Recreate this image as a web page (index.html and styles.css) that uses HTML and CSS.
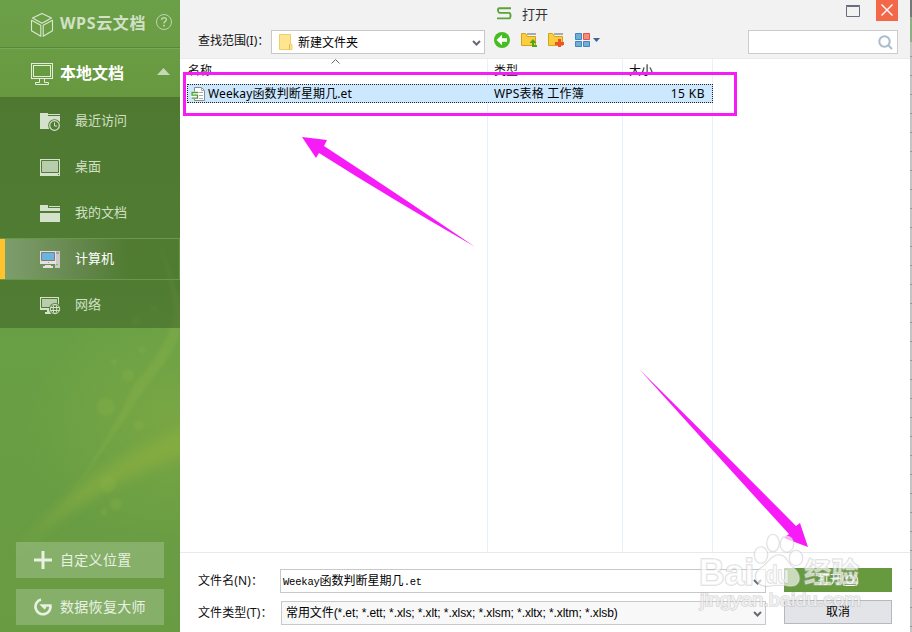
FILE: index.html
```html
<!DOCTYPE html>
<html lang="zh-CN">
<head>
<meta charset="utf-8">
<title>打开</title>
<link rel="stylesheet" href="styles.css">
</head>
<body>
<div class="app">
  <aside class="sidebar">
    <svg class="sidebar-art" viewBox="0 0 180 632" aria-hidden="true">
      <defs>
        <linearGradient id="base" x1="0" y1="0" x2="0" y2="1"><stop offset="0" stop-color="#6ca048"/><stop offset=".16" stop-color="#67983f"/><stop offset=".55" stop-color="#699f45"/><stop offset="1" stop-color="#699b42"/></linearGradient>
        <radialGradient id="glow"><stop offset="0" stop-color="#80aa44" stop-opacity=".7"/><stop offset="1" stop-color="#7aab45" stop-opacity="0"/></radialGradient>
        <filter id="soft" x="-30%" y="-30%" width="160%" height="160%"><feGaussianBlur stdDeviation="6"/></filter>
        <filter id="fine" x="-30%" y="-30%" width="160%" height="160%"><feGaussianBlur stdDeviation="1.8"/></filter>
      </defs>
      <rect width="180" height="632" fill="url(#base)"/>
      <ellipse cx="172" cy="420" rx="150" ry="130" fill="url(#glow)"/>
      <path d="M190 425 Q110 455 62 505 L12 555 Q90 485 190 455Z" fill="#8cb040" opacity=".6" filter="url(#soft)"/>
      <path d="M158 240 Q173 290 175 315 Q165 350 134 385 Q110 440 58 512 Q105 450 147 385 Q186 340 182 315 Q176 280 158 240Z" fill="#87b04a" opacity=".4" filter="url(#fine)"/>
      <g fill="#90b748" opacity=".25" filter="url(#fine)"><circle cx="128" cy="375" r="6"/><circle cx="114" cy="362" r="3"/><circle cx="142" cy="350" r="3"/><circle cx="136" cy="321" r="4"/><circle cx="154" cy="309" r="3"/><circle cx="106" cy="407" r="9"/><circle cx="139" cy="425" r="5"/><circle cx="116" cy="504" r="6"/><circle cx="104" cy="512" r="3"/><circle cx="108" cy="484" r="8"/></g>
    </svg>
    <div class="section">
      <svg class="section-icon" width="24" height="26" viewBox="0 0 24 26"><g fill="none" stroke="#d9e7cf" stroke-width="1.1" stroke-linejoin="round"><path d="M2.5 6 12 1.5 21.5 6 12 11.2Z"/><path d="M1.5 8.2 10.8 13.2V24.3L1.5 18.8Z"/><path d="M22.5 8.2 13.2 13.2V24.3L22.5 18.8Z"/></g></svg>
      <span class="section-name section-cloud">WPS云文档</span>
      <svg class="help" width="18" height="18" viewBox="0 0 18 18"><g fill="none" stroke="#bdd5ac"><circle cx="9" cy="9" r="7.5"/><path d="M6.6 7Q6.6 4.8 9 4.8T11.4 6.8Q11.4 7.8 10.2 8.5Q9 9.1 9 10.5" stroke-width="1.5"/></g><path d="M8.2 11.8h1.7v1.7H8.2z" fill="#bdd5ac"/></svg>
    </div>
    <div class="section section-open">
      <svg class="section-icon" width="24" height="24" viewBox="0 0 24 24"><g fill="none" stroke="#e4eddd"><rect x="1.5" y="1.5" width="21" height="15"/><rect x="3.5" y="3.5" width="17" height="11"/><path d="M9.5 17v3.5H5.5v2h13v-2h-4V17"/></g></svg>
      <span class="section-name">本地文档</span>
      <svg class="caret-up" width="13" height="7" viewBox="0 0 13 7"><path d="M0 7 6.5 0 13 7Z" fill="#c5d9b6"/></svg>
    </div>
    <nav class="places">
      <div class="place"><svg width="22" height="20" viewBox="0 0 22 20"><path d="M1 1h8v2h12v2H9v2h12v10H1z" fill="#d4e1cb"/><path d="M9 5h12v3H9z" fill="#d4e1cb"/><path d="M9 3.500h12" stroke="#507b32"/><path d="M9 2.500h12" stroke="#d4e1cb"/><circle cx="15.500" cy="13.500" r="6.300" fill="#507b32"/><circle cx="15.500" cy="13.500" r="4.800" fill="none" stroke="#d4e1cb" stroke-width="1.200"/><path d="M15.500 10.500v3.500H18" fill="none" stroke="#d4e1cb"/></svg><span>最近访问</span></div>
      <div class="place"><svg width="22" height="20" viewBox="0 0 22 20"><path d="M1 1h20v17H1z" fill="#d4e1cb"/><path d="M2.5 2.5h17v12h-17z" fill="#b9ccac" stroke="#507b32"/><path d="M19 16h1v1h-1z" fill="#507b32"/></svg><span>桌面</span></div>
      <div class="place"><svg width="22" height="20" viewBox="0 0 22 20"><path d="M1 1h8v3h12v3H1zM10 2h11v1H10zM1 9h20v9H1z" fill="#d4e1cb"/></svg><span>我的文档</span></div>
      <div class="place place-active"><svg width="22" height="20" viewBox="0 0 22 20"><path d="M17 1h4v17h-5V1z" fill="#cdc8ca"/><path d="M17 3h3" stroke="#867d80"/><path d="M1 1h16v13H1z" fill="#e7e2e2"/><path d="M2.5 2.5h13v8h-13z" fill="#6ab5df" stroke="#84797b"/><path d="M9 12h1v1H9zM17 14h2v1h-2z" fill="#62d521"/><path d="M6 15h6v1h2v2H4v-2h2z" fill="#e7e2e2"/></svg><span>计算机</span></div>
      <div class="place"><svg width="22" height="20" viewBox="0 0 22 20"><path d="M1 1h19v13H1z" fill="#d4e1cb"/><path d="M2.5 2.5h16v9h-16z" fill="#b9ccac" stroke="#507b32"/><path d="M8 14h5v4H6v-2h2z" fill="#d4e1cb"/><circle cx="16" cy="13" r="6" fill="#527c32"/><g fill="none" stroke="#d4e1cb"><circle cx="16" cy="13" r="4.700"/><ellipse cx="16" cy="13" rx="1.800" ry="4.700"/><path d="M11.500 11.500h9M11.500 14.500h9"/></g></svg><span>网络</span></div>
    </nav>
    <div class="tools">
      <div class="tool"><svg width="18" height="18" viewBox="0 0 18 18"><path d="M7.500 0h3v7.500H18v3h-7.500V18h-3v-7.500H0v-3h7.500z" fill="#e8f1e2"/></svg><span>自定义位置</span></div>
      <div class="tool"><svg width="18" height="18" viewBox="0 0 18 18"><path d="M7 1.500A7.500 7.500 0 1 0 16.400 7.500H8.500L11.500 10.500" fill="none" stroke="#e8f1e2" stroke-width="2.700"/></svg><span>数据恢复大师</span></div>
    </div>
  </aside>

  <main class="dialog">
    <header class="top">
      <div class="titlebar">
        <svg class="s-logo" width="15" height="13" viewBox="0 0 15 13"><path d="M14 1.200H2.200Q1 1.200 1 3.200T2.400 5.900H12.100Q13.500 5.900 13.500 8.600T12.200 11.400H0" fill="none" stroke="#5ba437" stroke-width="1.900"/></svg>
        <h1>打开</h1>
        <svg class="maximize" width="14" height="12" viewBox="0 0 14 12"><path d="M.5 1.5h13v10H.5zM0 .5h14" fill="none" stroke="#666d80"/></svg>
        <div class="close"><svg width="12" height="12" viewBox="0 0 12 12"><path d="m.5.5 11 11M11.5.5l-11 11" stroke="#fff" stroke-width="1.4"/></svg></div>
      </div>
      <div class="toolbar">
        <label>查找范围(I)：</label>
        <div class="lookin">
          <svg width="14" height="16" viewBox="0 0 14 16"><path d="M.5.5h11v10h1.5v5H.5z" fill="#ffe491" stroke="#efcf68"/><path d="M10.5 10.5v5" stroke="#e1b749"/></svg>
          <span>新建文件夹</span>
          <svg class="chev" width="9" height="7" viewBox="0 0 9 7"><path d="m1 1 3.5 3.5L8 1" fill="none" stroke="#666b78" stroke-width="2"/></svg>
        </div>
        <div class="actions">
          <svg width="16" height="16" viewBox="0 0 16 16"><circle cx="8" cy="8" r="8" fill="#46bd20"/><path d="M2.5 8 8 2.8v3.5h5v3.5H8v3.4Z" fill="#fff"/></svg>
          <svg width="17" height="16" viewBox="0 0 17 16"><path d="M6 1h9" stroke="#aaa" stroke-width="2"/><path d="M.5 .5h4l2 3h8v9H.5z" fill="#fccd3d" stroke="#d3a21d"/><path d="M12 6l3.500 4H13v2h3v2h-5v-4H8.500z" fill="#4da819"/></svg>
          <svg width="17" height="16" viewBox="0 0 17 16"><path d="M6 1h9" stroke="#aaa" stroke-width="2"/><path d="M.5 .5h4l2 3h8v9H.5z" fill="#fccd3d" stroke="#d3a21d"/><path d="M10 6h3v3h3v3h-3v2h-3v-2H7V9h3z" fill="#ef5428"/></svg>
          <svg width="25" height="15" viewBox="0 0 25 15"><g fill="#70afd0" stroke="#3f83cb"><path d="M.5.5h6v6h-6zM.5 8.500h6v5h-6zM8.500 8.500h6v5h-6z"/><path d="M8.500.5h6v6h-6z" fill="#f18c7e" stroke="#e4563b"/></g><path d="M18 5h7l-3.500 4z" fill="#3c639b"/></svg>
        </div>
        <div class="search"><svg width="15" height="15" viewBox="0 0 15 15"><g fill="none" stroke="#aabccb" stroke-width="2"><circle cx="6.5" cy="6.5" r="5.2"/><path d="m10 10 4 4"/></g></svg></div>
      </div>
    </header>

    <section class="files">
      <div class="cols"><div><span>名称</span><svg class="sort" width="9" height="5" viewBox="0 0 9 5"><path d="m.5 4.5 4-4 4 4" fill="none" stroke="#666"/></svg></div><div><span>类型</span></div><div><span>大小</span></div><div></div></div>
      <div class="file">
        <svg width="14" height="14" viewBox="0 0 14 14"><path d="M3.5.5h7l3 3v10h-10z" fill="#fff" stroke="#8b8b8b"/><path d="M10.5.5v3h3M7 5.5h5M8 8.5h4M8 11.5h4" fill="none" stroke="#aaa"/><path d="M0 4.500h7.500V12H0z" fill="#fff"/><path d="M7 5.500H1v2.700h5.500v3H.5" fill="none" stroke="#4e9b31" stroke-width="1.300"/></svg>
        <span class="file-name">Weekay函数判断星期几.et</span><span class="file-type">WPS表格 工作簿</span><span class="file-size">15 KB</span>
      </div>
    </section>

    <footer class="bottom">
      <div class="fields">
        <label>文件名(N)：</label>
        <div class="field name-field"><span><span class="mono">Weekay</span>函数判断星期几<span class="mono">.et</span></span><svg class="chev" width="9" height="7" viewBox="0 0 9 7"><path d="m1 1 3.5 3.5L8 1" fill="none" stroke="#666b78" stroke-width="2"/></svg></div>
        <label>文件类型(T)：</label>
        <div class="field type-field"><span>常用文件(*.et; *.ett; *.xls; *.xlt; *.xlsx; *.xlsm; *.xltx; *.xltm; *.xlsb)</span><svg class="chev" width="9" height="7" viewBox="0 0 9 7"><path d="m1 1 3.5 3.5L8 1" fill="none" stroke="#666b78" stroke-width="2"/></svg></div>
      </div>
      <div class="buttons"><div class="btn btn-open">打开(<u>O</u>)</div><div class="btn btn-cancel">取消</div></div>
    </footer>
  </main>
  <div class="edge"></div>

  <svg class="overlay" viewBox="0 0 912 632" width="912" height="632">
    <rect x="184.500" y="73.500" width="551" height="41" fill="none" stroke="#f71cf7" stroke-width="3"/>
    <path d="M302 137 327 140 324 146Q402 197 474.500 246.500Q390 198 319 153L316 158Z" fill="#f71cf7"/>
    <path d="M639.500 369.500Q718 447 796 526L800 523 808 547 784 538 789 534Q714 452 639.500 369.500Z" fill="#f71cf7"/>
    <g class="watermark">
      <g class="paw"><ellipse cx="761" cy="555" rx="6.500" ry="8"/><ellipse cx="773" cy="543" rx="6" ry="8.500"/><ellipse cx="787" cy="544" rx="6.500" ry="8"/><ellipse cx="796" cy="558" rx="6.500" ry="7.500"/><path d="M779 555C771 555 769 563 761 568C751 575 756 587 769 586Q779 584 788 586C800 588 803 577 795 569C787 564 787 555 779 555Z"/></g>
      <text class="brand" x="699" y="585" textLength="55" lengthAdjust="spacingAndGlyphs">Bai</text>
      <text class="du" x="766" y="583" textLength="23" lengthAdjust="spacingAndGlyphs">du</text>
      <text class="brand cn" x="804" y="583" textLength="55" lengthAdjust="spacingAndGlyphs">经验</text>
      <text class="url" x="700" y="606" textLength="161" lengthAdjust="spacingAndGlyphs">jingyan.baidu.com</text>
    </g>
  </svg>
</div>
</body>
</html>
```
FILE: styles.css
```css
* { box-sizing: border-box; }
body { margin: 0; font: 12px/16px "Noto Sans", "Noto Sans CJK SC", sans-serif; color: #111; }
svg { flex: none; display: block; }
.app { position: relative; display: flex; width: 912px; height: 632px; overflow: hidden; }
.sidebar { position: relative; z-index: 0; display: flex; flex-direction: column; width: 180px; color: #d2e0c7; }
.sidebar-art { position: absolute; inset: 0; z-index: -1; width: 180px; height: 632px; }
.section { display: flex; align-items: center; height: 48px; padding: 2px 8px 0 30px; border-bottom: 1px solid #55883a; box-shadow: 0 1px #78a85a; }
.section-name { margin: -2px 0 0 6px; font: bold 16px/22px "Open Sans", "Noto Sans CJK SC", sans-serif; white-space: nowrap; }
.section-cloud { margin-top: -4px; font-family: "Noto Sans", "Noto Sans CJK SC", sans-serif; letter-spacing: .65px; }
.help { margin: -6px -1px 0 auto; }
.section-open { height: 50px; color: #fff; border-bottom-color: #4b772e; box-shadow: none; }
.caret-up { margin: -4px 2px 0 auto; }
.places { height: 230px; background: rgba(52, 84, 30, .45); }
.place { display: flex; align-items: center; gap: 14px; height: 46px; padding: 1px 0 0 39px; font: 13px/18px "Noto Sans CJK SC", sans-serif; }
.place span { margin-top: -3px; }
.place-active { height: 42px; margin: 2px 0; color: #fff; border: 1px solid #689948; border-left: 0; background: linear-gradient(90deg, #ffc32b 5px, #7e9d6d 5px, #66884f 42%, rgba(79, 122, 45, .2) 72%); }
.tools { display: grid; gap: 11px; margin: auto 16px 7px; }
.tool { display: flex; align-items: center; gap: 8px; height: 36px; padding-left: 18px; background: rgba(168, 198, 149, .48); color: #e8f1e2; font: 14px/20px "Noto Sans CJK SC", sans-serif; white-space: nowrap; letter-spacing: .3px; }
.tool span { margin-top: -2px; }
.dialog { display: flex; flex-direction: column; width: 730px; background: #fff; }
.top { height: 59px; background: #f2f2f2; border-bottom: 1px solid #eaeaea; }
.titlebar { display: flex; align-items: flex-start; height: 30px; padding: 0 12px 0 317px; }
.s-logo { margin-top: 7px; }
h1 { margin: 4px 0 0 10px; font: 13px/19px "Noto Sans CJK SC", sans-serif; color: #333; }
.maximize { margin: 5px 16px 0 auto; }
.close { display: grid; place-content: center; width: 22px; height: 21px; padding-bottom: 2px; background: #f36848; }
.toolbar { display: flex; align-items: flex-start; padding-left: 18px; }
.toolbar label { width: 73px; margin-top: 3px; white-space: nowrap; }
.lookin { display: flex; align-items: center; width: 214px; height: 24px; padding: 0 3px 0 7px; border: 1px solid #c8c8c8; background: #fff; }
.lookin span { margin: 1px 0 0 5px; color: #000; }
.chev { margin: 2px 0 0 auto; }
.actions { display: flex; gap: 11px; margin: 2px 0 0 9px; }
.actions svg:nth-child(n+2) { margin-top: 1px; }
.actions svg:nth-child(3), .actions svg:nth-child(4) { margin-left: -1px; }
.search { display: flex; align-items: center; justify-content: flex-end; width: 150px; height: 24px; margin: 0 12px 0 auto; padding-right: 4px; border: 1px solid #ccc; background: #fff; }
.files { position: relative; height: 493px; }
.cols { display: grid; grid-template-columns: 308px 135px 90px 1fr; height: 493px; }
.cols div { position: relative; padding: 4px 0 0 6px; border-right: 1px solid #e7f1fb; }
.cols div:first-child { padding-left: 8px; }
.cols div:last-child { border: 0; }
.sort { position: absolute; left: 151px; top: 0; }
.file { position: absolute; left: 7px; top: 25px; display: grid; grid-template-columns: 14px 289px 1fr auto; align-items: center; width: 526px; height: 19px; padding: 0 7px 0 3px; border: 1px dotted #222; background: #cce8ff; white-space: nowrap; color: #000; }
.file-name { padding-left: 3px; letter-spacing: .12px; }
.file-type { letter-spacing: .2px; }
.file-size { letter-spacing: .45px; }
.bottom { display: flex; gap: 18px; height: 80px; padding: 16px 18px 0 18px; border-top: 1px solid #e9e9e9; }
.fields { display: grid; grid-template-columns: 82px 486px; grid-template-rows: 24px 24px; row-gap: 8px; width: 568px; align-items: center; }
.fields label { white-space: nowrap; letter-spacing: .1px; }
.field { display: flex; align-items: center; height: 24px; padding: 0 3px 0 3px; border: 1px solid #c8c8c8; white-space: nowrap; color: #000; }
.name-field { padding-left: 2px; }
.name-field > span { margin-top: 1px; }
.mono { font-family: "Liberation Mono", monospace; font-size: 10.5px; letter-spacing: -.2px; }
.type-field { margin-left: 1px; padding-left: 4px; background: #f8f8f8; font-family: "Liberation Sans", "Noto Sans CJK SC", sans-serif; letter-spacing: -.09px; }
.buttons { display: grid; grid-template-rows: 24px 24px; gap: 8px; width: 108px; margin-top: -1px; }
.btn { display: grid; grid-auto-flow: column; place-content: center; border: 1px solid #b5b8bf; background: #e2e4e8; color: #000; }
.btn-open { border-color: #65983f; background: #67993f; color: #fff; }
.edge { width: 2px; background: linear-gradient(#777 0 17px, #91ad83 17px 42px, transparent 42px), repeating-linear-gradient(#c4c4c7 0 18px, #999 18px 19px); }
.overlay { position: absolute; inset: 0; pointer-events: none; }
.watermark { fill: rgba(255, 255, 255, .65); stroke: rgba(185, 185, 185, .5); stroke-width: 1.6; paint-order: stroke; }
.brand { font: bold 36px "Liberation Sans", sans-serif; }
.cn { font: bold 28px "Noto Sans CJK SC", sans-serif; }
.du { font: bold 23px "Liberation Sans", sans-serif; }
.url { font: 18px "Liberation Sans", sans-serif; }
```
